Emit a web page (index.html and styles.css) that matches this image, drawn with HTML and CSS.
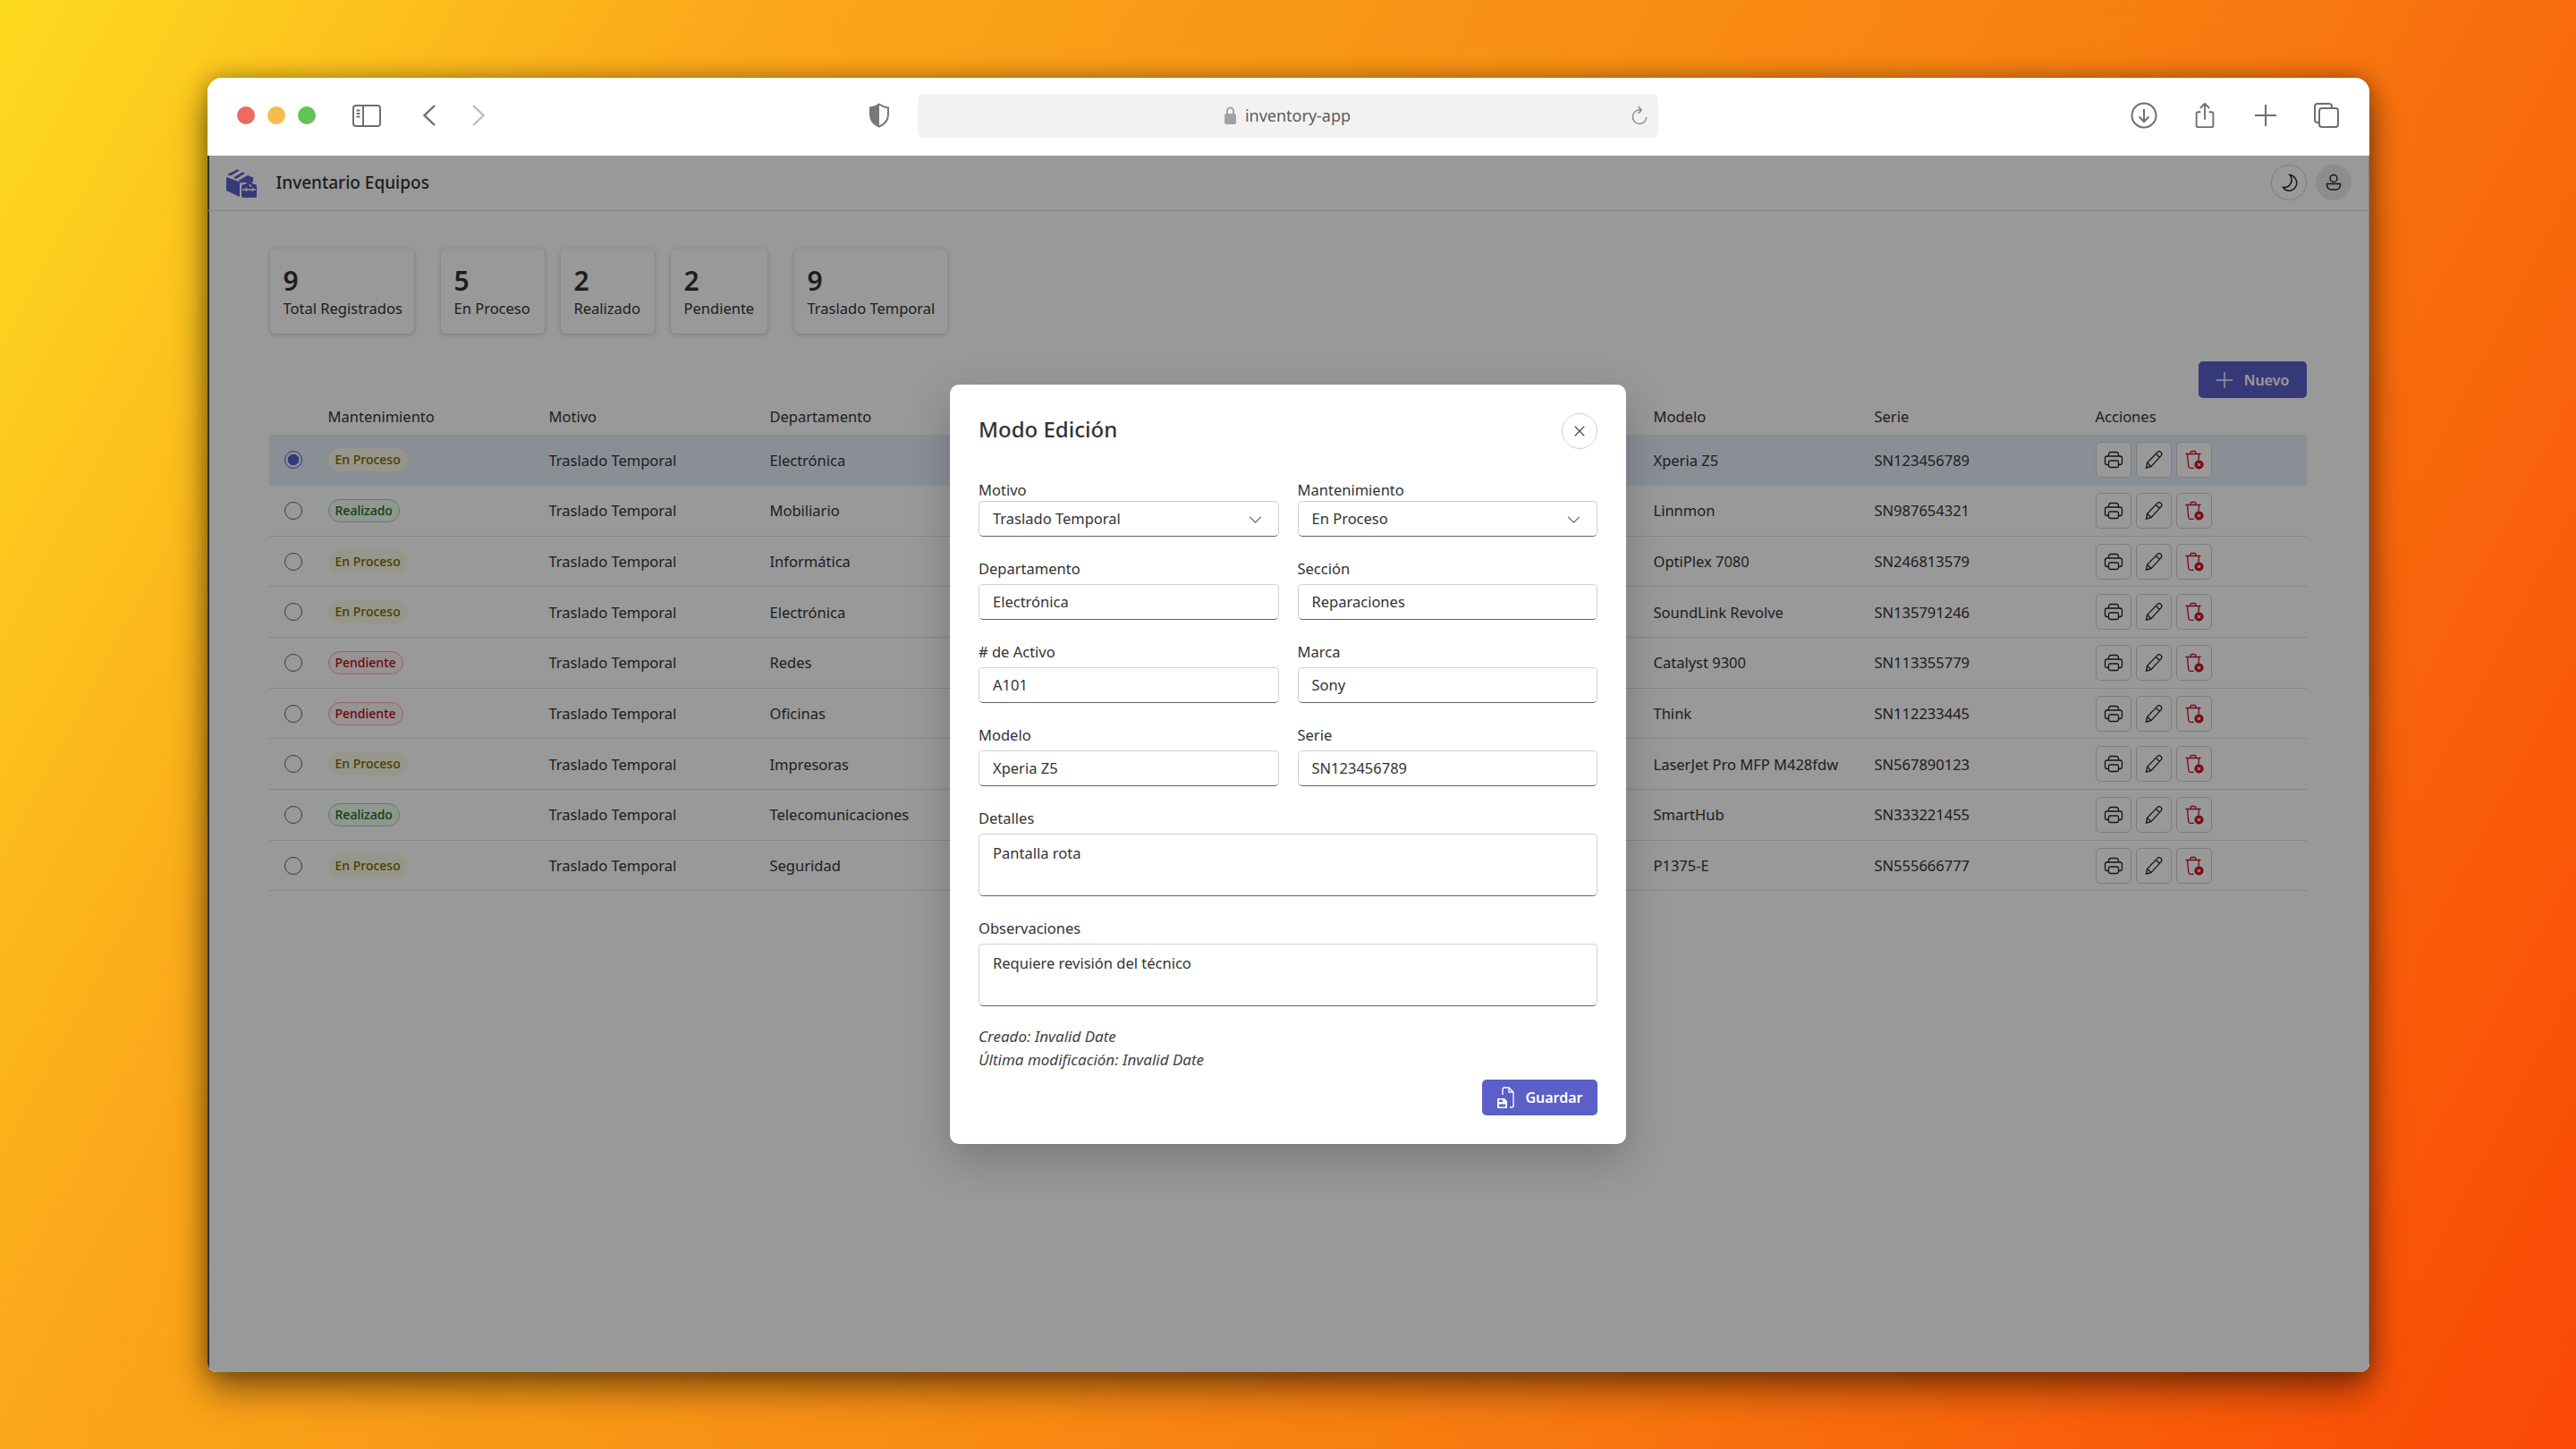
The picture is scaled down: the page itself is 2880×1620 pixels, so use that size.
FILE: index.html
```html
<!DOCTYPE html>
<html lang="es">
<head>
  <meta charset="UTF-8" />
  <title>Inventario Equipos</title>
  <link rel="stylesheet" href="styles.css">
</head>
<body>
  <!-- Iconos reutilizados en la tabla -->
  <svg class="sprite" width="0" height="0">
    <symbol id="i-print" viewBox="0 0 24 24">
      <path d="M6.5 8V6.2A2.7 2.7 0 0 1 9.2 3.5h5.6a2.7 2.7 0 0 1 2.7 2.7V8M6.5 17.5H4.8a2.3 2.3 0 0 1-2.3-2.3v-4.9A2.3 2.3 0 0 1 4.800 8h14.400a2.300 2.300 0 0 1 2.300 2.300v4.900a2.300 2.300 0 0 1-2.300 2.300H17.500" />
      <rect x="6.500" y="13" width="11" height="7.500" rx="1.800" />
    </symbol>
    <symbol id="i-edit" viewBox="0 0 24 24">
      <path d="M3.500 21l1.200-5.600L16.200 3.400a2.400 2.400 0 0 1 3.400 0l.6.600a2.400 2.400 0 0 1 0 3.400L8.900 19.600zM14.500 5.500l4 4M4.700 15.400l3.900 3.900" />
    </symbol>
    <symbol id="i-trash" viewBox="0 0 24 24">
      <path d="M2.500 5.500h17M8 5.500V3.800A1.300 1.300 0 0 1 9.300 2.500h3.400A1.300 1.300 0 0 1 14 3.800v1.700M4.500 5.500l1.300 14a2 2 0 0 0 2 1.800h4M17.500 5.500l-.5 7" />
      <circle class="trash-dot" cx="17.500" cy="17.500" r="5" />
      <path class="trash-x" d="M15.800 15.800l3.400 3.400M19.200 15.800l-3.400 3.400" />
    </symbol>
  </svg>

  <div class="window">
    <!-- Barra del navegador -->
    <header class="browser-bar">
      <div class="bar-left">
        <div class="lights">
          <span class="light red"></span>
          <span class="light yellow"></span>
          <span class="light green"></span>
        </div>
        <svg class="tool sidebar-icon" viewBox="0 0 32 25">
          <rect x="1" y="1" width="30" height="23" rx="3" />
          <path d="M12 1v23M4.500 6.500h4M4.500 10h4M4.500 13.500h4" />
        </svg>
        <svg class="tool chevron" viewBox="0 0 14 24"><path d="M13 1L1.500 12 13 23" /></svg>
        <svg class="tool chevron off" viewBox="0 0 14 24"><path d="M1 1l11.500 11L1 23" /></svg>
        <svg class="shield" viewBox="0 0 24 28">
          <path class="shield-half" d="M12 1.500v25c-6-2.600-10-6.700-10-13.500V5.500C6 5 9 3.800 12 1.500z" />
          <path class="shield-line" d="M12 1.500c3 2.300 6 3.500 10 4V13c0 6.800-4 10.900-10 13.500-6-2.600-10-6.700-10-13.500V5.500c4-.5 7-1.700 10-4z" />
        </svg>
      </div>
      <div class="url-box">
        <span class="url-text">
          <svg class="lock" viewBox="0 0 13 20">
            <path class="lock-arc" d="M3 9V5a3.500 3.500 0 0 1 7 0v4" />
            <rect y="8" width="13" height="12" rx="2" />
          </svg>
          inventory-app
        </span>
        <svg class="tool reload" viewBox="0 0 22 26"><path d="M13 5.500A8.500 8.500 0 1 0 19.500 14M9.500 1l4 4.500-4 4" /></svg>
      </div>
      <div class="bar-right">
        <svg class="tool btn-icon" viewBox="0 0 30 30">
          <circle cx="15" cy="15" r="13.500" />
          <path d="M15 8v14M9.500 16.500L15 22l5.500-5.500" />
        </svg>
        <svg class="tool btn-icon" viewBox="0 0 30 32">
          <path d="M10 12H7a2 2 0 0 0-2 2v14a2 2 0 0 0 2 2h16a2 2 0 0 0 2-2V14a2 2 0 0 0-2-2h-3M15 21V2M9.500 7.500L15 2l5.500 5.500" />
        </svg>
        <svg class="tool btn-icon" viewBox="0 0 30 30"><path d="M15 3v24M3 15h24" /></svg>
        <svg class="tool btn-icon" viewBox="0 0 30 30">
          <path d="M6 23H5a3 3 0 0 1-3-3V5a3 3 0 0 1 3-3h13a3 3 0 0 1 3 3v2" />
          <rect x="7" y="7" width="21" height="21" rx="3" />
        </svg>
      </div>
    </header>

    <div class="app">
      <!-- Cabecera de la app -->
      <div class="app-bar">
        <div class="brand">
          <svg class="logo" viewBox="0 0 34 34">
            <path class="logo-fill" d="M0 11L15 16.500V33L0 26z" />
            <path class="logo-fill" d="M1 8L12 2.500l3 1L5 9.500zM8 11.500L18 5.500l3 1.300L11 13zM14 14.500L24 9l6 2.500v5l-8 .5-7 .5z" />
            <path class="logo-fill" d="M17 22a3 3 0 0 1 3-3h1.500a5 5 0 0 1 9 0H32a2 2 0 0 1 2 2v11a2 2 0 0 1-2 2H19a2 2 0 0 1-2-2z" />
            <path class="logo-cut" d="M18 25h15M25.500 19.500a2.500 2.500 0 0 1 2 2.500M22.500 23v4M29.500 23v4" />
          </svg>
          <span class="brand-name">Inventario Equipos</span>
        </div>
        <div class="app-actions">
          <button class="round-btn">
            <svg viewBox="0 0 24 24"><path d="M13 3.500a8.500 8.500 0 0 1-7.500 14 8.500 8.500 0 0 0 9 3.500A9 9 0 0 0 13 3.500z" /></svg>
          </button>
          <button class="round-btn user">
            <svg viewBox="0 0 24 24"><circle cx="12" cy="7.500" r="4" /><path d="M4.500 13.500h15v1.500a5 5 0 0 1-5 5h-5a5 5 0 0 1-5-5z" /></svg>
          </button>
        </div>
      </div>

      <main class="content">
        <!-- Resumen -->
        <section class="stats">
          <div class="stat w-total"><strong>9</strong><span>Total Registrados</span></div>
          <div class="stats-group">
            <div class="stat w-proceso"><strong>5</strong><span>En Proceso</span></div>
            <div class="stat w-realizado"><strong>2</strong><span>Realizado</span></div>
            <div class="stat w-pendiente"><strong>2</strong><span>Pendiente</span></div>
          </div>
          <div class="stat w-traslado"><strong>9</strong><span>Traslado Temporal</span></div>
        </section>

        <div class="table-tools">
          <button class="primary-btn new-btn">
            <svg viewBox="0 0 20 20"><path d="M10 1v18M1 10h18" /></svg>
            Nuevo
          </button>
        </div>

        <table class="equipment">
          <colgroup>
            <col class="col-radio"><col class="col-data"><col class="col-data"><col class="col-data"><col class="col-data"><col class="col-data"><col class="col-data"><col class="col-data"><col class="col-data"><col>
          </colgroup>
          <thead>
            <tr>
              <th></th>
              <th>Mantenimiento</th>
              <th>Motivo</th>
              <th>Departamento</th>
              <th></th>
              <th></th>
              <th></th>
              <th>Modelo</th>
              <th>Serie</th>
              <th>Acciones</th>
            </tr>
          </thead>
          <tbody>
            <tr class="selected">
              <td><span class="radio on"></span></td>
              <td><span class="badge proceso">En Proceso</span></td>
              <td>Traslado Temporal</td><td>Electrónica</td><td></td><td></td><td></td>
              <td>Xperia Z5</td><td>SN123456789</td>
              <td><div class="row-actions"><button><svg><use href="#i-print" /></svg></button><button><svg><use href="#i-edit" /></svg></button><button class="danger"><svg><use href="#i-trash" /></svg></button></div></td>
            </tr>
            <tr>
              <td><span class="radio"></span></td>
              <td><span class="badge realizado">Realizado</span></td>
              <td>Traslado Temporal</td><td>Mobiliario</td><td></td><td></td><td></td>
              <td>Linnmon</td><td>SN987654321</td>
              <td><div class="row-actions"><button><svg><use href="#i-print" /></svg></button><button><svg><use href="#i-edit" /></svg></button><button class="danger"><svg><use href="#i-trash" /></svg></button></div></td>
            </tr>
            <tr>
              <td><span class="radio"></span></td>
              <td><span class="badge proceso">En Proceso</span></td>
              <td>Traslado Temporal</td><td>Informática</td><td></td><td></td><td></td>
              <td>OptiPlex 7080</td><td>SN246813579</td>
              <td><div class="row-actions"><button><svg><use href="#i-print" /></svg></button><button><svg><use href="#i-edit" /></svg></button><button class="danger"><svg><use href="#i-trash" /></svg></button></div></td>
            </tr>
            <tr>
              <td><span class="radio"></span></td>
              <td><span class="badge proceso">En Proceso</span></td>
              <td>Traslado Temporal</td><td>Electrónica</td><td></td><td></td><td></td>
              <td>SoundLink Revolve</td><td>SN135791246</td>
              <td><div class="row-actions"><button><svg><use href="#i-print" /></svg></button><button><svg><use href="#i-edit" /></svg></button><button class="danger"><svg><use href="#i-trash" /></svg></button></div></td>
            </tr>
            <tr>
              <td><span class="radio"></span></td>
              <td><span class="badge pendiente">Pendiente</span></td>
              <td>Traslado Temporal</td><td>Redes</td><td></td><td></td><td></td>
              <td>Catalyst 9300</td><td>SN113355779</td>
              <td><div class="row-actions"><button><svg><use href="#i-print" /></svg></button><button><svg><use href="#i-edit" /></svg></button><button class="danger"><svg><use href="#i-trash" /></svg></button></div></td>
            </tr>
            <tr>
              <td><span class="radio"></span></td>
              <td><span class="badge pendiente">Pendiente</span></td>
              <td>Traslado Temporal</td><td>Oficinas</td><td></td><td></td><td></td>
              <td>Think</td><td>SN112233445</td>
              <td><div class="row-actions"><button><svg><use href="#i-print" /></svg></button><button><svg><use href="#i-edit" /></svg></button><button class="danger"><svg><use href="#i-trash" /></svg></button></div></td>
            </tr>
            <tr>
              <td><span class="radio"></span></td>
              <td><span class="badge proceso">En Proceso</span></td>
              <td>Traslado Temporal</td><td>Impresoras</td><td></td><td></td><td></td>
              <td>LaserJet Pro MFP M428fdw</td><td>SN567890123</td>
              <td><div class="row-actions"><button><svg><use href="#i-print" /></svg></button><button><svg><use href="#i-edit" /></svg></button><button class="danger"><svg><use href="#i-trash" /></svg></button></div></td>
            </tr>
            <tr>
              <td><span class="radio"></span></td>
              <td><span class="badge realizado">Realizado</span></td>
              <td>Traslado Temporal</td><td>Telecomunicaciones</td><td></td><td></td><td></td>
              <td>SmartHub</td><td>SN333221455</td>
              <td><div class="row-actions"><button><svg><use href="#i-print" /></svg></button><button><svg><use href="#i-edit" /></svg></button><button class="danger"><svg><use href="#i-trash" /></svg></button></div></td>
            </tr>
            <tr>
              <td><span class="radio"></span></td>
              <td><span class="badge proceso">En Proceso</span></td>
              <td>Traslado Temporal</td><td>Seguridad</td><td></td><td></td><td></td>
              <td>P1375-E</td><td>SN555666777</td>
              <td><div class="row-actions"><button><svg><use href="#i-print" /></svg></button><button><svg><use href="#i-edit" /></svg></button><button class="danger"><svg><use href="#i-trash" /></svg></button></div></td>
            </tr>
          </tbody>
        </table>
      </main>

      <!-- Modal de edición -->
      <div class="overlay">
        <div class="modal">
          <div class="modal-head">
            <h2>Modo Edición</h2>
            <button class="close-btn">
              <svg viewBox="0 0 16 16"><path d="M2 2l12 12M14 2L2 14" /></svg>
            </button>
          </div>
          <form class="edit-form">
            <div class="field select-field">
              <label>Motivo</label>
              <div class="control">Traslado Temporal
                <svg class="caret" viewBox="0 0 16 10"><path d="M1 1l7 7 7-7" /></svg>
              </div>
            </div>
            <div class="field select-field">
              <label>Mantenimiento</label>
              <div class="control">En Proceso
                <svg class="caret" viewBox="0 0 16 10"><path d="M1 1l7 7 7-7" /></svg>
              </div>
            </div>
            <div class="field"><label>Departamento</label><div class="control">Electrónica</div></div>
            <div class="field"><label>Sección</label><div class="control">Reparaciones</div></div>
            <div class="field"><label># de Activo</label><div class="control">A101</div></div>
            <div class="field"><label>Marca</label><div class="control">Sony</div></div>
            <div class="field"><label>Modelo</label><div class="control">Xperia Z5</div></div>
            <div class="field"><label>Serie</label><div class="control">SN123456789</div></div>
            <div class="field wide"><label>Detalles</label><div class="control area">Pantalla rota</div></div>
            <div class="field wide"><label>Observaciones</label><div class="control area">Requiere revisión del técnico</div></div>
          </form>
          <div class="meta">
            <div>Creado: Invalid Date</div>
            <div>Última modificación: Invalid Date</div>
          </div>
          <div class="modal-foot">
            <button class="primary-btn save-btn">
              <svg viewBox="0 0 20 24">
                <path class="save-line" d="M7 9V3a2 2 0 0 1 2-2h5l5 5v15a2 2 0 0 1-2 2h-2M14 1v5h5" />
                <path class="save-fill" d="M1 13h8l3 3v8H1zM3 14.500v2.500h4v-2.500zM3 19.500V22.500h7v-3z" />
              </svg>
              Guardar
            </button>
          </div>
        </div>
      </div>
    </div>
  </div>
</body>
</html>
```

FILE: styles.css
```css
* {
  box-sizing: border-box;
}
html, body {
  height: 100%;
}
body {
  margin: 0;
  padding-top: 1px;
  display: flex;
  align-items: center;
  justify-content: center;
  overflow: hidden;
  font-family: "Noto Sans", "Open Sans", sans-serif;
  font-size: 16.500px;
  color: #333;
  background: linear-gradient(118deg, #fddb20 0%, #fba81a 22%, #f88f14 48%, #f77a10 68%, #fa4806 100%);
}
button {
  font-family: inherit;
}
.sprite {
  position: absolute;
}

/* Ventana */
.window {
  width: 2417px;
  height: 1447px;
  display: flex;
  flex-direction: column;
  border-radius: 16px 16px 10px 10px;
  overflow: hidden;
  background: #fff;
  box-shadow: 0 20px 40px rgba(0,0,0,.45), 0 0 24px rgba(0,0,0,.3);
}
.browser-bar {
  height: 87px;
  flex: none;
  padding-bottom: 3px;
  display: grid;
  grid-template-columns: 794px 828px 1fr;
  background: #fff;
  align-items: center;
}
.bar-left {
  display: flex;
  align-items: center;
  padding: 0 31px 0 33px;
}
.lights {
  display: flex;
  gap: 14px;
  margin-right: 41px;
}
.light {
  width: 20px;
  height: 20px;
  border-radius: 50%;
}
.red { background: #ee6a5f; }
.yellow { background: #f5bd4f; }
.green { background: #61c454; }
.tool {
  fill: none;
  stroke: #6e6e6e;
  stroke-width: 2;
}
.sidebar-icon {
  width: 32px;
  height: 25px;
  margin-right: 47px;
}
.chevron {
  width: 14px;
  height: 24px;
  margin-right: 41px;
  stroke-width: 2.400;
}
.chevron.off {
  stroke: #bdbdbd;
  margin-right: 0;
}
.shield {
  width: 24px;
  height: 28px;
  margin-left: auto;
}
.shield-half { fill: #777; }
.shield-line { fill: none; stroke: #777; stroke-width: 2; }
.url-box {
  height: 49px;
  position: relative;
  display: flex;
  align-items: center;
  justify-content: center;
  background: #f2f2f2;
  border-radius: 7px;
  color: #5a5a5a;
  font-size: 18px;
}
.url-text {
  display: flex;
  align-items: center;
  gap: 10px;
}
.lock {
  width: 13px;
  height: 20px;
  fill: #a3a3a3;
}
.lock-arc {
  fill: none;
  stroke: #a3a3a3;
  stroke-width: 2;
}
.reload {
  width: 20px;
  height: 24px;
  position: absolute;
  right: 11px;
  top: 13px;
  stroke: #8a8a8a;
  stroke-width: 1.600;
}
.bar-right {
  display: flex;
  justify-content: flex-end;
  align-items: center;
  gap: 38px;
  padding-right: 33px;
}
.btn-icon {
  width: 30px;
  height: 30px;
}

/* App */
.app {
  flex: 1;
  position: relative;
  display: flex;
  flex-direction: column;
  background: #fff;
  box-shadow: inset 2px 0 0 #555, inset -1px 0 0 #ddd;
}
.app-bar {
  height: 62px;
  flex: none;
  display: flex;
  align-items: center;
  justify-content: space-between;
  padding: 0 20px 2px 21px;
  border-bottom: 1px solid #e0e0e0;
}
.brand {
  display: flex;
  align-items: center;
  gap: 22px;
}
.logo {
  width: 34px;
  height: 34px;
}
.logo-fill { fill: #5b5fc7; }
.logo-cut { fill: none; stroke: #fff; stroke-width: 1.400; }
.brand-name {
  font-size: 19px;
  font-weight: 500;
}
.app-actions {
  display: flex;
  gap: 10px;
}
.round-btn {
  width: 40px;
  height: 40px;
  padding: 0;
  display: flex;
  align-items: center;
  justify-content: center;
  border: 1px solid #d1d1d1;
  border-radius: 50%;
  background: #fff;
}
.round-btn svg {
  width: 24px;
  height: 24px;
  fill: none;
  stroke: #242424;
  stroke-width: 1.500;
}
.round-btn.user {
  background: #ebebeb;
  border-color: #ebebeb;
}
.content {
  padding: 42px 70px 0 69px;
}
.stats {
  display: flex;
  gap: 30px;
  margin-left: 1px;
}
.stats-group {
  display: flex;
  gap: 18px;
}
.stat {
  height: 95px;
  padding: 17px 0 0 15px;
  display: flex;
  flex-direction: column;
  background: #fff;
  border-radius: 6px;
  box-shadow: 0 1px 5px rgba(0,0,0,.22);
}
.w-total { width: 161px; }
.w-proceso { width: 116px; }
.w-realizado { width: 105px; }
.w-pendiente { width: 108px; }
.w-traslado { width: 171px; }
.stat strong {
  font-size: 30px;
  line-height: 38px;
  font-weight: 600;
}
.stat span {
  line-height: 24px;
  white-space: nowrap;
}
.table-tools {
  display: flex;
  justify-content: flex-end;
  margin-top: 31px;
}
.primary-btn {
  display: flex;
  align-items: center;
  justify-content: center;
  height: 41px;
  border: none;
  border-radius: 5px;
  background: #5b5fc7;
  color: #fff;
  font-size: 16px;
  font-weight: 600;
}
.new-btn {
  width: 121px;
  gap: 12px;
}
.new-btn svg {
  width: 20px;
  height: 20px;
  fill: none;
  stroke: #fff;
  stroke-width: 1.400;
}

/* Tabla */
.equipment {
  width: 100%;
  table-layout: fixed;
  border-collapse: collapse;
}
.col-radio { width: 66px; }
.col-data { width: 247px; }
.equipment th {
  height: 41px;
  padding: 0;
  text-align: left;
  font-weight: 400;
}
.equipment td {
  height: 56.670px;
  padding: 0;
  white-space: nowrap;
  border-bottom: 1px solid #e0e0e0;
}
.equipment tr.selected td {
  background: #e6eefb;
  border-bottom-color: #e6eefb;
}
.radio {
  display: block;
  width: 20px;
  height: 20px;
  margin-left: 17px;
  border: 1.500px solid #616161;
  border-radius: 50%;
}
.radio.on {
  border-color: #5b5fc7;
  background: radial-gradient(circle, #5b5fc7 0, #5b5fc7 6px, transparent 6.500px);
}
.badge {
  display: inline-block;
  height: 26px;
  padding: 0 7px;
  line-height: 24px;
  font-size: 14px;
  font-weight: 500;
  border: 1px solid;
  border-radius: 13px;
}
.proceso { color: #756a00; background: #fbfbe8; border-color: #fbfbe8; }
.realizado { color: #0e700e; background: #f1faf1; border-color: #9fd89f; }
.pendiente { color: #b10e1c; background: #fdf3f4; border-color: #eeacb2; }
.row-actions {
  display: flex;
  gap: 5px;
}
.row-actions button {
  width: 40px;
  height: 40px;
  padding: 0;
  display: flex;
  align-items: center;
  justify-content: center;
  background: #fff;
  border: 1px solid #d1d1d1;
  border-radius: 5px;
}
.row-actions svg {
  width: 24px;
  height: 24px;
  fill: none;
  stroke: #242424;
  stroke-width: 1.300;
}
.row-actions .danger svg {
  stroke: #c50f1f;
}
.trash-dot {
  fill: #c50f1f;
  stroke: none;
}
.trash-x {
  stroke: #fff;
  stroke-width: 1.200;
}

/* Modal */
.overlay {
  position: absolute;
  inset: 0;
  display: flex;
  align-items: center;
  justify-content: center;
  background: rgba(0,0,0,.4);
}
.modal {
  width: 756px;
  height: 849px;
  padding: 32px;
  background: #fff;
  border-radius: 10px;
  box-shadow: 0 16px 48px rgba(0,0,0,.22);
}
.modal-head {
  display: flex;
  align-items: center;
  justify-content: space-between;
  height: 40px;
}
.modal-head h2 {
  margin: 0;
  padding-bottom: 4px;
  font-size: 24px;
  font-weight: 500;
}
.close-btn {
  width: 40px;
  height: 40px;
  padding: 0;
  display: flex;
  align-items: center;
  justify-content: center;
  background: #fff;
  border: 1px solid #d1d1d1;
  border-radius: 50%;
}
.close-btn svg {
  width: 14px;
  height: 14px;
  fill: none;
  stroke: #424242;
  stroke-width: 1.300;
}
.edit-form {
  margin-top: 35px;
  display: grid;
  grid-template-columns: 1fr 1fr;
  column-gap: 21px;
  row-gap: 25px;
}
.field {
  display: flex;
  flex-direction: column;
  gap: 6px;
}
.select-field {
  gap: 1px;
}
.field.wide {
  grid-column: 1 / -1;
}
.field label {
  line-height: 22px;
}
.control {
  position: relative;
  height: 40px;
  padding: 0 15px;
  display: flex;
  align-items: center;
  background: #fff;
  border: 1px solid #d1d1d1;
  border-bottom-color: #616161;
  border-radius: 5px;
}
.control.area {
  height: 70px;
  padding-top: 9px;
  align-items: flex-start;
  line-height: 24px;
}
.caret {
  position: absolute;
  right: 18px;
  top: 16px;
  width: 15px;
  height: 9px;
  fill: none;
  stroke: #616161;
  stroke-width: 1.300;
}
.meta {
  margin-top: 21px;
  font-size: 17px;
  font-style: italic;
  line-height: 26px;
  color: #424242;
}
.modal-foot {
  margin-top: 9px;
  display: flex;
  justify-content: flex-end;
}
.save-btn {
  width: 129px;
  height: 40px;
  gap: 12px;
}
.save-btn svg {
  width: 20px;
  height: 24px;
}
.save-line { fill: none; stroke: #fff; stroke-width: 1.300; }
.save-fill { fill: #fff; fill-rule: evenodd; }
```
